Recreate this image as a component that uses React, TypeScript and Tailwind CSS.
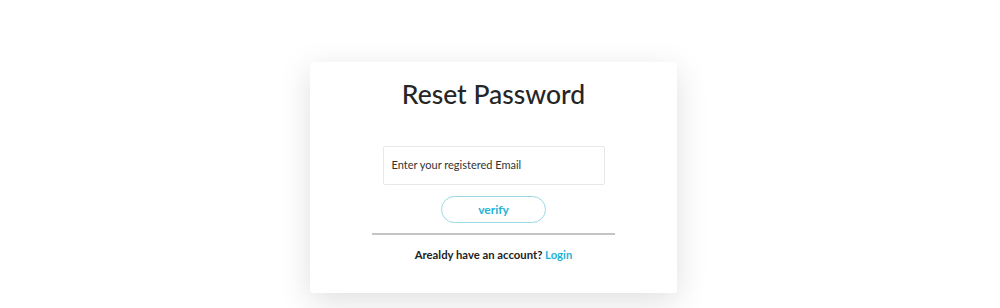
export default function App() {
  return (
    <div className="w-[1000px] h-[308px] bg-white overflow-hidden" style={{ fontFamily: 'Lato, "Noto Sans", sans-serif' }}>
      <div className="flex justify-center pr-[13px] pt-[62px]">
        <div className="w-[367px] h-[231px] bg-white rounded-[3px] shadow-[0_8px_32px_rgba(0,0,0,0.13)] flex flex-col items-center">
          <h1 className="mt-[12px] text-[26.5px] leading-[40px] font-medium text-[#262626]">Reset Password</h1>
          <div className="mt-[32px] w-[222px] h-[39px] border border-[#e8e8e8] rounded-[2px] flex items-center pl-[8px]">
            <span className="text-[11px] text-[#333]">Enter your registered Email</span>
          </div>
          <button className="mt-[11px] w-[105px] h-[27px] rounded-full border border-[#9ad8e6] text-[12px] font-bold text-[#1fb3d6] leading-none">verify</button>
          <div className="mt-[10px] w-[243px] h-[2px] bg-[#c4c4c4]"></div>
          <p className="mt-[13px] text-[11.3px] font-bold text-[#222] leading-[14px]">
            Arealdy have an account? <span className="text-[#1fb3d6]">Login</span>
          </p>
        </div>
      </div>
    </div>
  );
}
